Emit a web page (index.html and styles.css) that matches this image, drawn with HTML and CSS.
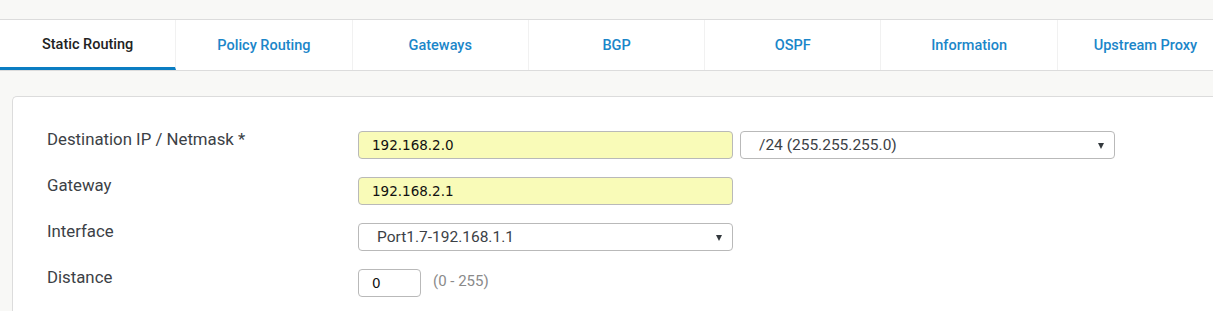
FILE: index.html
```html
<!DOCTYPE html>
<html lang="en">
<head>
    <meta charset="UTF-8">
    <title>Static Routing</title>
    <link rel="stylesheet" href="styles.css">
</head>
<body>
    <div class="barra"></div>

    <!-- Pestañas -->
    <div class="pestanas">
        <a class="pestana activa">Static Routing</a>
        <a class="pestana">Policy Routing</a>
        <a class="pestana">Gateways</a>
        <a class="pestana">BGP</a>
        <a class="pestana">OSPF</a>
        <a class="pestana">Information</a>
        <a class="pestana">Upstream Proxy</a>
    </div>

    <div class="contenido">
        <div class="panel">
            <div class="fila">
                <label>Destination IP / Netmask *</label>
                <input class="campo requerido" type="text" value="192.168.2.0">
                <div class="selector">
                    <span>/24 (255.255.255.0)</span>
                    <span class="flecha"></span>
                </div>
            </div>
            <div class="fila">
                <label>Gateway</label>
                <input class="campo requerido" type="text" value="192.168.2.1">
            </div>
            <div class="fila">
                <label>Interface</label>
                <div class="selector">
                    <span>Port1.7-192.168.1.1</span>
                    <span class="flecha"></span>
                </div>
            </div>
            <div class="fila">
                <label>Distance</label>
                <input class="campo corto" type="text" value="0">
                <span class="ayuda">(0 - 255)</span>
            </div>
        </div>
    </div>
</body>
</html>
```

FILE: styles.css
```css
body {
    margin: 0;
    background-color: #f8f8f6;
    font-family: Roboto, "Open Sans", sans-serif;
    color: #3c4146;
    overflow: hidden;
}

.barra {
    height: 19px;
}

.pestanas {
    display: flex;
    height: 50px;
    background-color: #ffffff;
    border-top: 1px solid #dcdcdc;
    border-bottom: 1px solid #dcdcdc;
    overflow: hidden;
}

.pestana {
    flex: 0 0 176.3px;
    box-sizing: border-box;
    display: flex;
    align-items: center;
    justify-content: center;
    border-right: 1px solid #f1f1f1;
    font-size: 14.5px;
    font-weight: 500;
    color: #1b86c9;
    cursor: pointer;
}

.pestana.activa {
    color: #222222;
    border-bottom: 3px solid #0a7dc2;
    padding-top: 2px;
}

.contenido {
    padding: 25px 0 0 12px;
}

.panel {
    background-color: #ffffff;
    border: 1px solid #dcdcdc;
    border-right: none;
    border-radius: 5px 0 0 0;
    padding: 34px 0 0 34px;
    height: 180px;
}

.fila {
    display: flex;
    align-items: flex-start;
    gap: 7px;
    margin-bottom: 18px;
}

.fila label {
    flex: 0 0 304px;
    font-size: 16.8px;
    line-height: 20px;
    margin-top: -2px;
}

.campo {
    width: 375px;
    height: 28px;
    box-sizing: border-box;
    border: 1px solid #b9b9b9;
    border-radius: 4px;
    padding: 0 13px;
    font-family: "DejaVu Sans", sans-serif;
    font-size: 13.5px;
    color: #111111;
    background-color: #ffffff;
    outline: none;
}

.campo.requerido {
    background-color: #f9fbb8;
}

.campo.corto {
    width: 63px;
}

.selector {
    position: relative;
    display: flex;
    align-items: center;
    width: 375px;
    height: 28px;
    box-sizing: border-box;
    border: 1px solid #b9b9b9;
    border-radius: 4px;
    padding-left: 18px;
    background-color: #ffffff;
    font-size: 15.5px;
    cursor: pointer;
}

.flecha {
    position: absolute;
    right: 10px;
    top: 11px;
    width: 0;
    height: 0;
    border-left: 3px solid transparent;
    border-right: 3px solid transparent;
    border-top: 6px solid #33393d;
}

.ayuda {
    margin: 3px 0 0 5px;
    font-size: 15px;
    color: #8a8a8a;
}
```
